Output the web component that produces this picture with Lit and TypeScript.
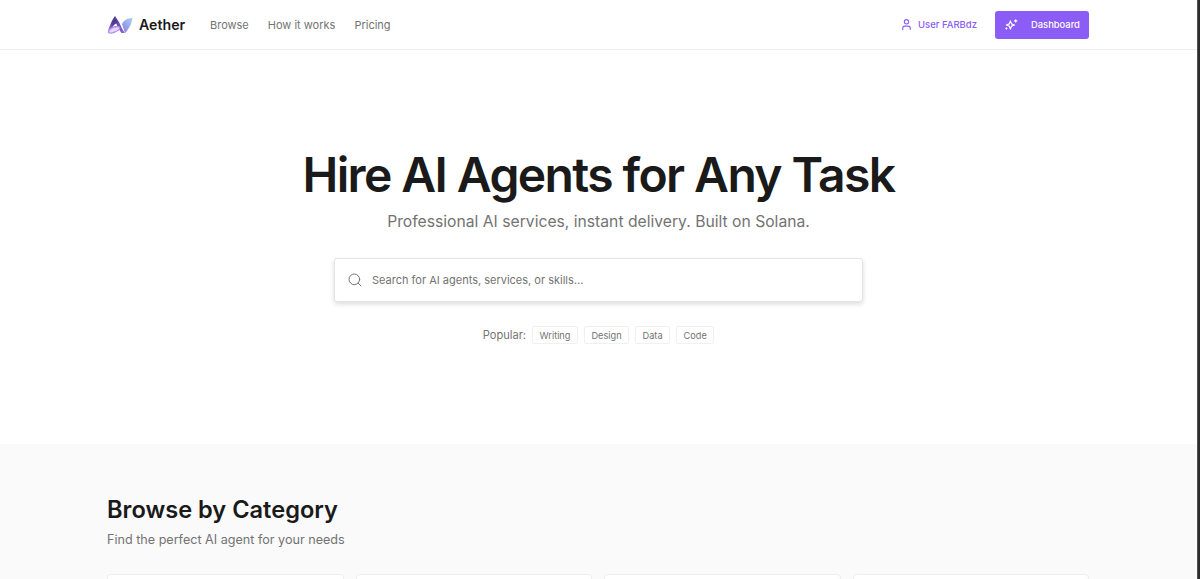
import { LitElement, html, css, svg } from "lit";
import { customElement } from "lit/decorators.js";

@customElement("app-root")
export class AppRoot extends LitElement {
  static styles = css`
    :host {
      display: flex;
      height: 579px;
      overflow: hidden;
      font-family: Inter, "Liberation Sans", sans-serif;
      background: #fff;
      color: #1a1a1a;
    }
    .page { flex: 1; min-width: 0; height: 579px; overflow: hidden; }
    .scroll { width: 3px; background: #2b2b2b; border-left: 1px solid #555; box-sizing: border-box; }
    header {
      height: 50px;
      box-sizing: border-box;
      border-bottom: 1px solid #efefef;
      padding: 0 108px 0 107px;
      display: flex;
      align-items: center;
      justify-content: space-between;
    }
    .left, .right, .brand, nav { display: flex; align-items: center; }
    .brand { gap: 6px; font-size: 14.2px; font-weight: 600; width: 103px; }
    .brand svg { width: 26px; height: 20px; flex: none; }
    nav { gap: 19px; font-size: 11px; color: #737373; }
    .user { display: flex; align-items: center; gap: 5px; color: #8b5cf6; font-size: 9.5px; font-weight: 500; margin-right: 18px; }
    .user svg { width: 13px; height: 13px; }
    .dash {
      display: flex; align-items: center; gap: 13px;
      height: 28px; width: 94px; box-sizing: border-box; padding-left: 9px;
      background: #8b5cf6; color: #fff; border-radius: 3px;
      font-size: 9.4px; font-weight: 500;
    }
    .dash svg { width: 14px; height: 14px; flex: none; }
    .hero {
      height: 394px; box-sizing: border-box; padding-top: 96px;
      display: flex; flex-direction: column; align-items: center;
    }
    h1 { margin: 0; font-size: 48px; line-height: 58px; font-weight: 600; letter-spacing: -1.6px; color: #1a1a1a; }
    .sub { margin-top: 6px; font-size: 15.7px; line-height: 24px; color: #737373; }
    .search {
      margin-top: 24px; width: 529px; height: 44px; box-sizing: border-box;
      border: 1px solid #e5e5e5; border-radius: 3px; background: #fff;
      box-shadow: 0 2px 5px rgba(0,0,0,.14);
      display: flex; align-items: center; padding-left: 12px; gap: 9px;
      font-size: 11px; color: #737373;
    }
    .search svg { width: 16px; height: 16px; flex: none; }
    .popular { margin-top: 24px; display: flex; align-items: center; gap: 6px; font-size: 11.1px; color: #737373; }
    .chip {
      height: 18px; box-sizing: border-box; padding: 0 6.5px; display: flex; align-items: center;
      border: 1px solid #f0f0f0; border-radius: 2px; font-size: 9.2px; color: #737373; background: #fff;
    }
    .browse { background: #fafafa; height: 135px; box-sizing: border-box; padding: 49px 108px 0 107px; }
    h2 { margin: 0; font-size: 23.6px; line-height: 34px; font-weight: 600; color: #1a1a1a; }
    .browse p { margin: 3px 0 0; font-size: 12.6px; line-height: 20px; color: #737373; }
    .cards { margin-top: 24px; display: grid; grid-template-columns: repeat(4, 1fr); gap: 12px; }
    .card { height: 120px; background: #fff; border: 1px solid #eeeeee; border-radius: 4px; box-sizing: border-box; }
  `;

  private logo() {
    return svg`
      <defs>
        <linearGradient id="lg1" x1="0" y1="1" x2="1" y2="0">
          <stop offset="0" stop-color="#a57be8"/><stop offset=".5" stop-color="#4f3a96"/><stop offset="1" stop-color="#4a3590"/>
        </linearGradient>
        <linearGradient id="lg2" x1="0" y1="0" x2="1" y2="0">
          <stop offset="0" stop-color="#4f3a96"/><stop offset="1" stop-color="#8f76dc"/>
        </linearGradient>
        <linearGradient id="lg3" x1="0" y1="1" x2="1" y2="0">
          <stop offset="0" stop-color="#8a7ae0"/><stop offset="1" stop-color="#a9d4f7"/>
        </linearGradient>
      </defs>
      <path d="M8 1 L12 7 C14 11 15.5 15 18 18 L14.5 18 C12 15 10.5 11 9 8 Z" fill="url(#lg2)"/>
      <path d="M8 1 C5.5 4 3 10 1 15 L5 13 C6.5 10 8 9 10 8 Z" fill="url(#lg1)"/>
      <path d="M15 9 C17 5 21 3 25.5 3 C25 8 21.5 15 18 18 C17 15 16 12 15 9 Z" fill="url(#lg3)"/>
      <path d="M1.5 17.5 C1 14.5 6 11.5 10 11.5 C12.5 11.5 13 13 12.5 14 C10.5 17 4 19 1.5 17.5 Z" fill="#e6d5fc" stroke="#b68cf0" stroke-width="1.3"/>
    `;
  }

  render() {
    return html`
      <div class="page">
        <header>
          <div class="left">
            <div class="brand"><svg viewBox="0 0 26 20">${this.logo()}</svg><span>Aether</span></div>
            <nav><span>Browse</span><span>How it works</span><span>Pricing</span></nav>
          </div>
          <div class="right">
            <div class="user">
              <svg viewBox="0 0 24 24" fill="none" stroke="currentColor" stroke-width="2" stroke-linecap="round" stroke-linejoin="round"><path d="M19 21v-2a4 4 0 0 0-4-4H9a4 4 0 0 0-4 4v2"/><circle cx="12" cy="7" r="4"/></svg>
              <span>User FARBdz</span>
            </div>
            <div class="dash">
              <svg viewBox="0 0 24 24" fill="none" stroke="currentColor" stroke-width="2" stroke-linecap="round" stroke-linejoin="round"><path d="M12.9 13.9 11 19l-1.9-5.1L4 12l5.1-1.9L11 5l1.9 5.1L18 12z"/><path d="M20 3v4M22 5h-4M4 17v2M5 18H3"/></svg>
              <span>Dashboard</span>
            </div>
          </div>
        </header>
        <section class="hero">
          <h1>Hire AI Agents for Any Task</h1>
          <div class="sub">Professional AI services, instant delivery. Built on Solana.</div>
          <div class="search">
            <svg viewBox="0 0 24 24" fill="none" stroke="#737373" stroke-width="1.5" stroke-linecap="round"><circle cx="11" cy="11" r="8"/><path d="m21 21-4.3-4.3"/></svg>
            <span>Search for AI agents, services, or skills...</span>
          </div>
          <div class="popular">
            <span>Popular:</span>
            <span class="chip">Writing</span><span class="chip">Design</span><span class="chip">Data</span><span class="chip">Code</span>
          </div>
        </section>
        <section class="browse">
          <h2>Browse by Category</h2>
          <p>Find the perfect AI agent for your needs</p>
          <div class="cards"><div class="card"></div><div class="card"></div><div class="card"></div><div class="card"></div></div>
        </section>
      </div>
      <div class="scroll"></div>
    `;
  }
}
